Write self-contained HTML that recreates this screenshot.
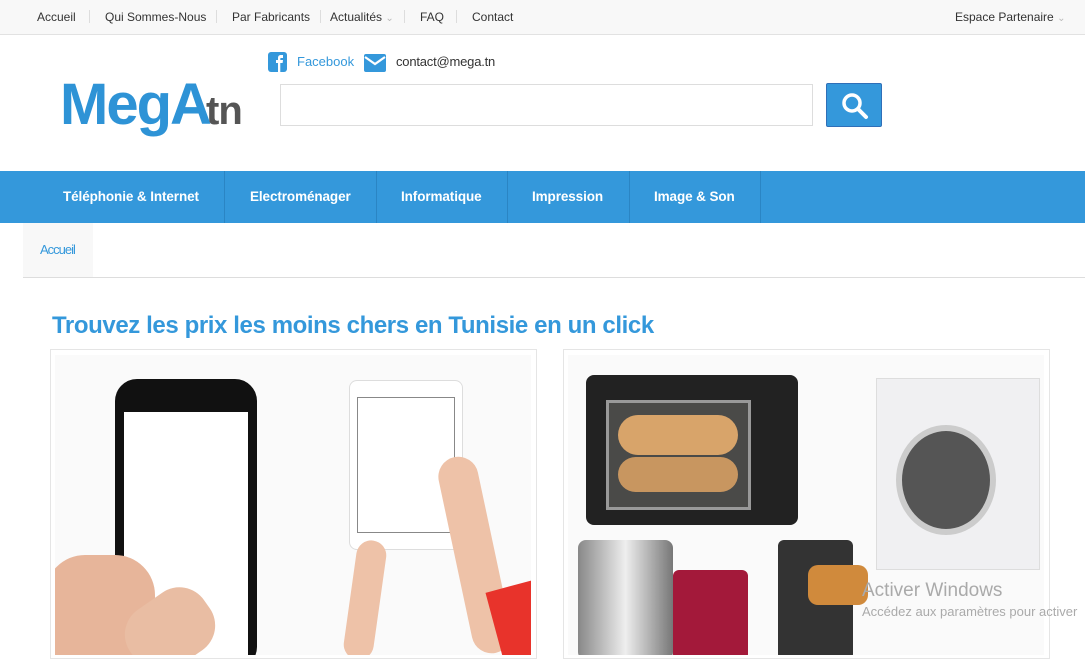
<!DOCTYPE html>
<html><head><meta charset="utf-8"><style>
*{margin:0;padding:0;box-sizing:border-box}
body{width:1085px;height:654px;overflow:hidden;background:#fff;font-family:"Liberation Sans",sans-serif;position:relative}
.a{position:absolute}
.top{left:0;top:0;width:1085px;height:35px;background:#f8f8f8;border-bottom:1px solid #e2e2e2}
.top span{position:absolute;top:10px;font-size:12px;color:#333}
.sep{position:absolute;top:10px;width:1px;height:13px;background:#ddd}
.nav{left:0;top:171px;width:1085px;height:52px;background:#3498db}
.nav span{position:absolute;top:18px;color:#fff;font-weight:bold;font-size:13.5px;letter-spacing:-0.1px}
.nav i{position:absolute;top:0;width:1px;height:52px;background:#2a85c4}
</style></head><body>
<div class="a top">
<span style="left:37px">Accueil</span><div class="sep" style="left:89px"></div>
<span style="left:105px">Qui Sommes-Nous</span><div class="sep" style="left:216px"></div>
<span style="left:232px">Par Fabricants</span><div class="sep" style="left:320px"></div>
<span style="left:330px">Actualités <small style="color:#bbb">⌄</small></span><div class="sep" style="left:404px"></div>
<span style="left:420px">FAQ</span><div class="sep" style="left:456px"></div>
<span style="left:472px">Contact</span>
<span style="left:955px">Espace Partenaire <small style="color:#bbb">⌄</small></span>
</div>
<div class="a" style="left:60px;top:70px;font-size:58px;font-weight:bold;color:#2e93d6;letter-spacing:-2px;line-height:70px">MegA</div>
<div class="a" style="left:206px;top:86px;font-size:40px;font-weight:bold;color:#555;letter-spacing:-1px;line-height:50px">tn</div>
<svg class="a" style="left:268px;top:52px" width="19" height="20"><rect width="19" height="20" rx="3" fill="#3498db"/><path d="M10 20V11H8V8h2V6c0-2 1-3 3-3h2v3h-2c-.5 0-.7.3-.7.8V8H15l-.4 3h-2.3v9z" fill="#fff"/></svg>
<div class="a" style="left:297px;top:54px;font-size:13px;color:#3498db">Facebook</div>
<svg class="a" style="left:364px;top:54px" width="22" height="18"><rect width="22" height="18" rx="2" fill="#3498db"/><path d="M1 3l10 7 10-7" stroke="#fff" stroke-width="2.2" fill="none"/></svg>
<div class="a" style="left:396px;top:54px;font-size:13px;color:#333;letter-spacing:-0.2px">contact@mega.tn</div>
<div class="a" style="left:280px;top:84px;width:533px;height:42px;border:1px solid #ddd"></div>
<div class="a" style="left:826px;top:83px;width:56px;height:44px;background:#3498db;border:1px solid #2f6fb8;border-radius:2px"></div>
<svg class="a" style="left:840px;top:91px" width="30" height="30"><circle cx="12" cy="12" r="8" stroke="#fff" stroke-width="3.5" fill="none"/><path d="M18 18l8 8" stroke="#fff" stroke-width="4" stroke-linecap="round"/></svg>
<div class="a nav">
<span style="left:63px">Téléphonie &amp; Internet</span><i style="left:224px"></i>
<span style="left:250px">Electroménager</span><i style="left:376px"></i>
<span style="left:401px">Informatique</span><i style="left:507px"></i>
<span style="left:532px">Impression</span><i style="left:629px"></i>
<span style="left:654px">Image &amp; Son</span><i style="left:760px"></i>
</div>
<div class="a" style="left:23px;top:223px;width:70px;height:54px;background:#f8f8f8"></div>
<div class="a" style="left:40px;top:242px;font-size:13px;color:#3498db;letter-spacing:-1px">Accueil</div>
<div class="a" style="left:23px;top:277px;width:1062px;height:1px;background:#ddd"></div>
<div class="a" style="left:52px;top:312px;font-size:24px;font-weight:bold;color:#3498db;letter-spacing:-0.4px">Trouvez les prix les moins chers en Tunisie en un click</div>
<div class="a" style="left:50px;top:349px;width:487px;height:310px;border:1px solid #e5e5e5"></div>
<div class="a" style="left:55px;top:355px;width:476px;height:300px;background:#fafafa;overflow:hidden">
 <div class="a" style="left:60px;top:24px;width:142px;height:290px;background:#111;border-radius:22px"></div>
 <div class="a" style="left:69px;top:57px;width:124px;height:250px;background:#fff"></div>
 <div class="a" style="left:-10px;top:200px;width:110px;height:120px;background:#e7b59a;border-radius:40px 40px 0 0"></div>
 <div class="a" style="left:70px;top:240px;width:90px;height:70px;background:#e9bda3;border-radius:30px;transform:rotate(-35deg)"></div>
 <div class="a" style="left:294px;top:25px;width:114px;height:170px;background:#fff;border:1px solid #ddd;border-radius:8px"></div>
 <div class="a" style="left:302px;top:42px;width:98px;height:136px;background:#fff;border:1px solid #888"></div>
 <div class="a" style="left:400px;top:100px;width:40px;height:200px;background:#eec2a8;border-radius:20px;transform:rotate(-12deg)"></div>
 <div class="a" style="left:440px;top:230px;width:50px;height:80px;background:#e8332b;transform:rotate(-15deg)"></div>
 <div class="a" style="left:295px;top:185px;width:30px;height:120px;background:#eec2a8;border-radius:15px;transform:rotate(8deg)"></div>
</div>
<div class="a" style="left:563px;top:349px;width:487px;height:310px;border:1px solid #e5e5e5"></div>
<div class="a" style="left:568px;top:355px;width:476px;height:300px;background:#fafafa;overflow:hidden">
 <div class="a" style="left:18px;top:20px;width:212px;height:150px;background:#222;border-radius:8px"></div>
 <div class="a" style="left:38px;top:45px;width:145px;height:110px;background:#4a4a48;border:3px solid #999"></div>
 <div class="a" style="left:50px;top:60px;width:120px;height:40px;background:#d8a46a;border-radius:20px"></div>
 <div class="a" style="left:50px;top:102px;width:120px;height:35px;background:#c89660;border-radius:18px"></div>
 <div class="a" style="left:308px;top:23px;width:164px;height:192px;background:#f0f0f2;border:1px solid #ddd"></div>
 <div class="a" style="left:328px;top:70px;width:100px;height:110px;border-radius:50%;background:#555;border:6px solid #ccc"></div>
 <div class="a" style="left:10px;top:185px;width:95px;height:120px;background:linear-gradient(90deg,#888,#eee,#777);border-radius:8px"></div>
 <div class="a" style="left:105px;top:215px;width:75px;height:90px;background:#a3193a;border-radius:6px"></div>
 <div class="a" style="left:210px;top:185px;width:75px;height:120px;background:#333;border-radius:6px"></div>
 <div class="a" style="left:240px;top:210px;width:60px;height:40px;background:#d08a3c;border-radius:10px"></div>
</div>
<div class="a" style="left:862px;top:580px;font-size:19px;color:#aaa">Activer Windows</div>
<div class="a" style="left:862px;top:604px;font-size:13px;color:#aaa;white-space:nowrap">Accédez aux paramètres pour activer</div>
</body></html>
